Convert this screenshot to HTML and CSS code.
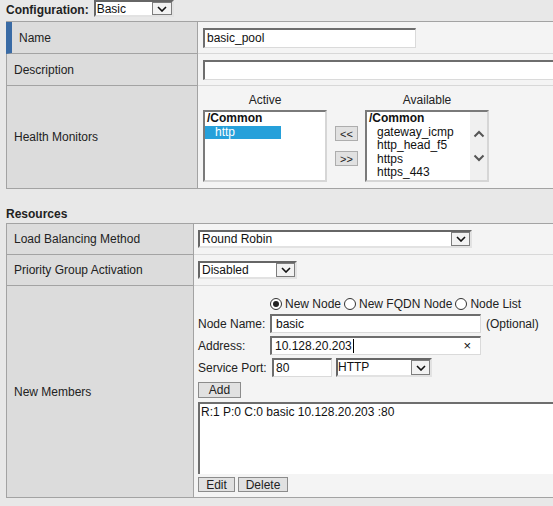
FILE: index.html
```html
<!DOCTYPE html>
<html>
<head>
<meta charset="utf-8">
<link rel="stylesheet" href="styles.css">
</head>
<body>
<div class="config">
  <span class="config-label">Configuration:</span>
  <span class="sel sel-basic"><span class="sel-text">Basic</span><span class="sel-arrow"><svg width="10" height="6" viewBox="0 0 10 6"><polyline points="1,1 5,5 9,1" fill="none" stroke="#111" stroke-width="1.6"/></svg></span></span>
</div>

<div class="grid g1">
  <div class="lab lab-active">Name</div>
  <div class="val"><span class="inp inp-name">basic_pool</span></div>
  <div class="lab">Description</div>
  <div class="val"><span class="inp inp-desc"></span></div>
  <div class="lab last">Health Monitors</div>
  <div class="val last val-hm">
    <div class="hm-col">
      <div class="hm-cap">Active</div>
      <div class="lst">
        <div class="lst-items">
          <div class="opt opt-head">/Common</div>
          <div class="opt opt-sub opt-sel">http</div>
        </div>
      </div>
    </div>
    <div class="hm-btns">
      <span class="btn btn-move">&lt;&lt;</span>
      <span class="btn btn-move">&gt;&gt;</span>
    </div>
    <div class="hm-col">
      <div class="hm-cap">Available</div>
      <div class="lst">
        <div class="lst-items">
          <div class="opt opt-head">/Common</div>
          <div class="opt opt-sub">gateway_icmp</div>
          <div class="opt opt-sub">http_head_f5</div>
          <div class="opt opt-sub">https</div>
          <div class="opt opt-sub">https_443</div>
        </div>
        <div class="lst-scroll">
          <svg width="12" height="8" viewBox="0 0 12 8"><polyline points="1.5,6.5 6,2 10.5,6.5" fill="none" stroke="#555" stroke-width="2"/></svg>
          <svg width="12" height="8" viewBox="0 0 12 8"><polyline points="1.5,1.5 6,6 10.5,1.5" fill="none" stroke="#555" stroke-width="2"/></svg>
        </div>
      </div>
    </div>
  </div>
</div>

<div class="section-title">Resources</div>

<div class="grid g2">
  <div class="lab">Load Balancing Method</div>
  <div class="val">
    <span class="sel sel-lb"><span class="sel-text">Round Robin</span><span class="sel-arrow"><svg width="10" height="6" viewBox="0 0 10 6"><polyline points="1,1 5,5 9,1" fill="none" stroke="#111" stroke-width="1.6"/></svg></span></span>
  </div>
  <div class="lab">Priority Group Activation</div>
  <div class="val">
    <span class="sel sel-pg"><span class="sel-text">Disabled</span><span class="sel-arrow"><svg width="10" height="6" viewBox="0 0 10 6"><polyline points="1,1 5,5 9,1" fill="none" stroke="#111" stroke-width="1.6"/></svg></span></span>
  </div>
  <div class="lab last">New Members</div>
  <div class="val last val-nm">
    <div class="nm-grid">
      <span></span>
      <div class="radios">
        <span class="radio checked"></span><span class="radio-text">New Node</span>
        <span class="radio"></span><span class="radio-text">New FQDN Node</span>
        <span class="radio"></span><span class="radio-text">Node List</span>
      </div>
      <span class="nm-label">Node Name:</span>
      <div class="nm-field"><span class="inp inp-node">basic</span><span class="hint">(Optional)</span></div>
      <span class="nm-label">Address:</span>
      <div class="nm-field"><span class="inp inp-node inp-addr"><span class="addr-text">10.128.20.203<span class="caret"></span></span><span class="clear">×</span></span></div>
      <span class="nm-label">Service Port:</span>
      <div class="nm-field">
        <span class="inp inp-port">80</span>
        <span class="sel sel-http"><span class="sel-text">HTTP</span><span class="sel-arrow"><svg width="10" height="6" viewBox="0 0 10 6"><polyline points="1,1 5,5 9,1" fill="none" stroke="#111" stroke-width="1.6"/></svg></span></span>
      </div>
    </div>
    <span class="btn btn-add">Add</span>
    <div class="textarea">R:1 P:0 C:0 basic 10.128.20.203 :80</div>
    <div class="btn-row">
      <span class="btn btn-edit">Edit</span>
      <span class="btn btn-del">Delete</span>
    </div>
  </div>
</div>
</body>
</html>
```

FILE: styles.css
```css
html, body {
  margin: 0;
  background: #e8e8e8;
  overflow: hidden;
}
body {
  padding: 0 0 0 6px;
  font-family: "Liberation Sans", Arial, sans-serif;
  font-size: 12px;
  line-height: 14px;
  color: #222;
}

.config {
  display: flex;
  align-items: flex-start;
  height: 21px;
}
.config-label {
  font-weight: bold;
  padding-top: 3px;
  margin-right: 5px;
}

/* select look-alike */
.sel {
  box-sizing: border-box;
  display: inline-flex;
  height: 18px;
  background: #fff;
  border-top: 2px solid #666;
  border-left: 2px solid #666;
  border-right: 2px solid #e2e2e2;
  border-bottom: 2px solid #e2e2e2;
}
.sel-text {
  flex: 1;
  padding-left: 2px;
  line-height: 14px;
  color: #111;
}
.sel-arrow {
  box-sizing: border-box;
  width: 19px;
  border: 1px solid #7d7d7d;
  background: #f2f2f2;
  display: flex;
  align-items: center;
  justify-content: center;
}
.sel-basic { width: 80px; height: 17px; }
.sel-basic .sel-text { padding-left: 1px; }
.sel-basic .sel-arrow { width: 20px; }
.sel-lb { width: 274px; }
.sel-pg { width: 99px; }
.sel-http { width: 96px; height: 19px; margin-left: 4px; }
.sel-http .sel-text { padding-left: 0; }

/* input look-alike */
.inp {
  box-sizing: border-box;
  display: inline-flex;
  align-items: center;
  background: #fff;
  height: 20px;
  border-top: 2px solid #6e6e6e;
  border-left: 2px solid #6e6e6e;
  border-right: 1px solid #dadada;
  border-bottom: 1px solid #dadada;
  padding-left: 2px;
  color: #111;
}
.inp-name { width: 213px; }
.inp-desc { width: 380px; }

/* form grids */
.grid {
  display: grid;
  width: 620px;
  border-top: 1px solid #a3a3a3;
}
.g1 {
  grid-template-columns: 192px 1fr;
  grid-template-rows: 32px 32px 103px;
}
.g2 {
  grid-template-columns: 188px 1fr;
  grid-template-rows: 31px 31px 212px;
}
.lab {
  box-sizing: border-box;
  background: #dcdcdc;
  border-left: 1px solid #a3a3a3;
  border-right: 1px solid #a3a3a3;
  border-bottom: 1px solid #a3a3a3;
  padding-left: 7px;
  display: flex;
  align-items: center;
}
.lab-active {
  border-left: 6px solid #3a6ba5;
}
.val {
  box-sizing: border-box;
  background: #f4f4f4;
  border-bottom: 1px solid #d8d8d8;
  display: flex;
  align-items: center;
  padding-left: 5px;
}
.val.last { border-bottom-color: #a3a3a3; }
.g2 .val { padding-left: 4px; }

/* health monitors */
.val-hm {
  align-items: flex-start;
  padding-top: 7px;
}
.hm-col {
  display: flex;
  flex-direction: column;
  align-items: center;
  width: 124px;
}
.hm-cap { margin-bottom: 3px; }
.lst {
  box-sizing: border-box;
  width: 124px;
  height: 72px;
  background: #fff;
  border-top: 2px solid #7a7a7a;
  border-left: 2px solid #7a7a7a;
  border-right: 2px solid #d6d6d6;
  border-bottom: 2px solid #d6d6d6;
  display: flex;
  overflow: hidden;
}
.lst-items { flex: 1; }
.opt {
  line-height: 13.5px;
  padding-left: 2px;
  color: #111;
  white-space: nowrap;
}
.opt-head { font-weight: bold; }
.opt-sub { padding-left: 10px; }
.opt-sel {
  box-sizing: border-box;
  width: 76px;
  background: #26a0da;
  color: #fff;
}
.lst-scroll {
  width: 17px;
  background: #f0f0f0;
  display: flex;
  flex-direction: column;
  align-items: center;
  justify-content: center;
  gap: 16px;
}
.hm-btns {
  display: flex;
  flex-direction: column;
  gap: 10px;
  margin: 33px 7px 0 8px;
}
.btn {
  box-sizing: border-box;
  display: inline-flex;
  align-items: center;
  justify-content: center;
  background: #e1e1e1;
  border: 1px solid #8c8c8c;
  color: #222;
}
.btn-move {
  width: 23px;
  height: 15px;
  font-size: 11px;
  border-color: #adadad;
}

.section-title {
  font-weight: bold;
  margin: 18px 0 2px 0;
  height: 14px;
}

/* new members */
.val-nm {
  flex-direction: column;
  align-items: flex-start;
  padding-top: 10px;
}
.nm-grid {
  display: grid;
  grid-template-columns: 72px auto;
  grid-template-rows: 15px 19px 19px 19px;
  row-gap: 3px;
  align-items: center;
}
.radios {
  display: flex;
  align-items: center;
  white-space: nowrap;
}
.radio {
  box-sizing: border-box;
  width: 12px;
  height: 12px;
  border: 1px solid #333;
  border-radius: 50%;
  background: #fff;
  display: inline-flex;
  align-items: center;
  justify-content: center;
  margin-left: 3px;
}
.radio:first-child { margin-left: 0; }
.radio.checked::after {
  content: "";
  width: 6px;
  height: 6px;
  border-radius: 50%;
  background: #222;
}
.radio-text { margin-left: 3px; }
.nm-field {
  display: flex;
  align-items: center;
}
.inp-node {
  width: 211px;
  height: 19px;
  padding-left: 4px;
}
.inp-addr {
  justify-content: space-between;
  padding-left: 3px;
  padding-right: 9px;
}
.addr-text {
  display: inline-flex;
  align-items: center;
}
.caret {
  display: inline-block;
  width: 1px;
  height: 14px;
  background: #000;
  margin-left: 1px;
}
.clear { font-size: 13px; }
.hint { margin-left: 5px; }
.inp-port {
  width: 60px;
  height: 19px;
  margin-left: 2px;
  padding-left: 2px;
}
.btn-add {
  margin-top: 5px;
  width: 43px;
  height: 16px;
}
.textarea {
  box-sizing: border-box;
  margin-top: 4px;
  width: 400px;
  height: 72px;
  background: #fff;
  border-top: 2px solid #6e6e6e;
  border-left: 2px solid #6e6e6e;
  padding: 1px 1px;
  color: #111;
}
.btn-row {
  margin-top: 3px;
  display: flex;
  gap: 3px;
}
.btn-edit { width: 37px; height: 15px; }
.btn-del { width: 50px; height: 15px; }
```
